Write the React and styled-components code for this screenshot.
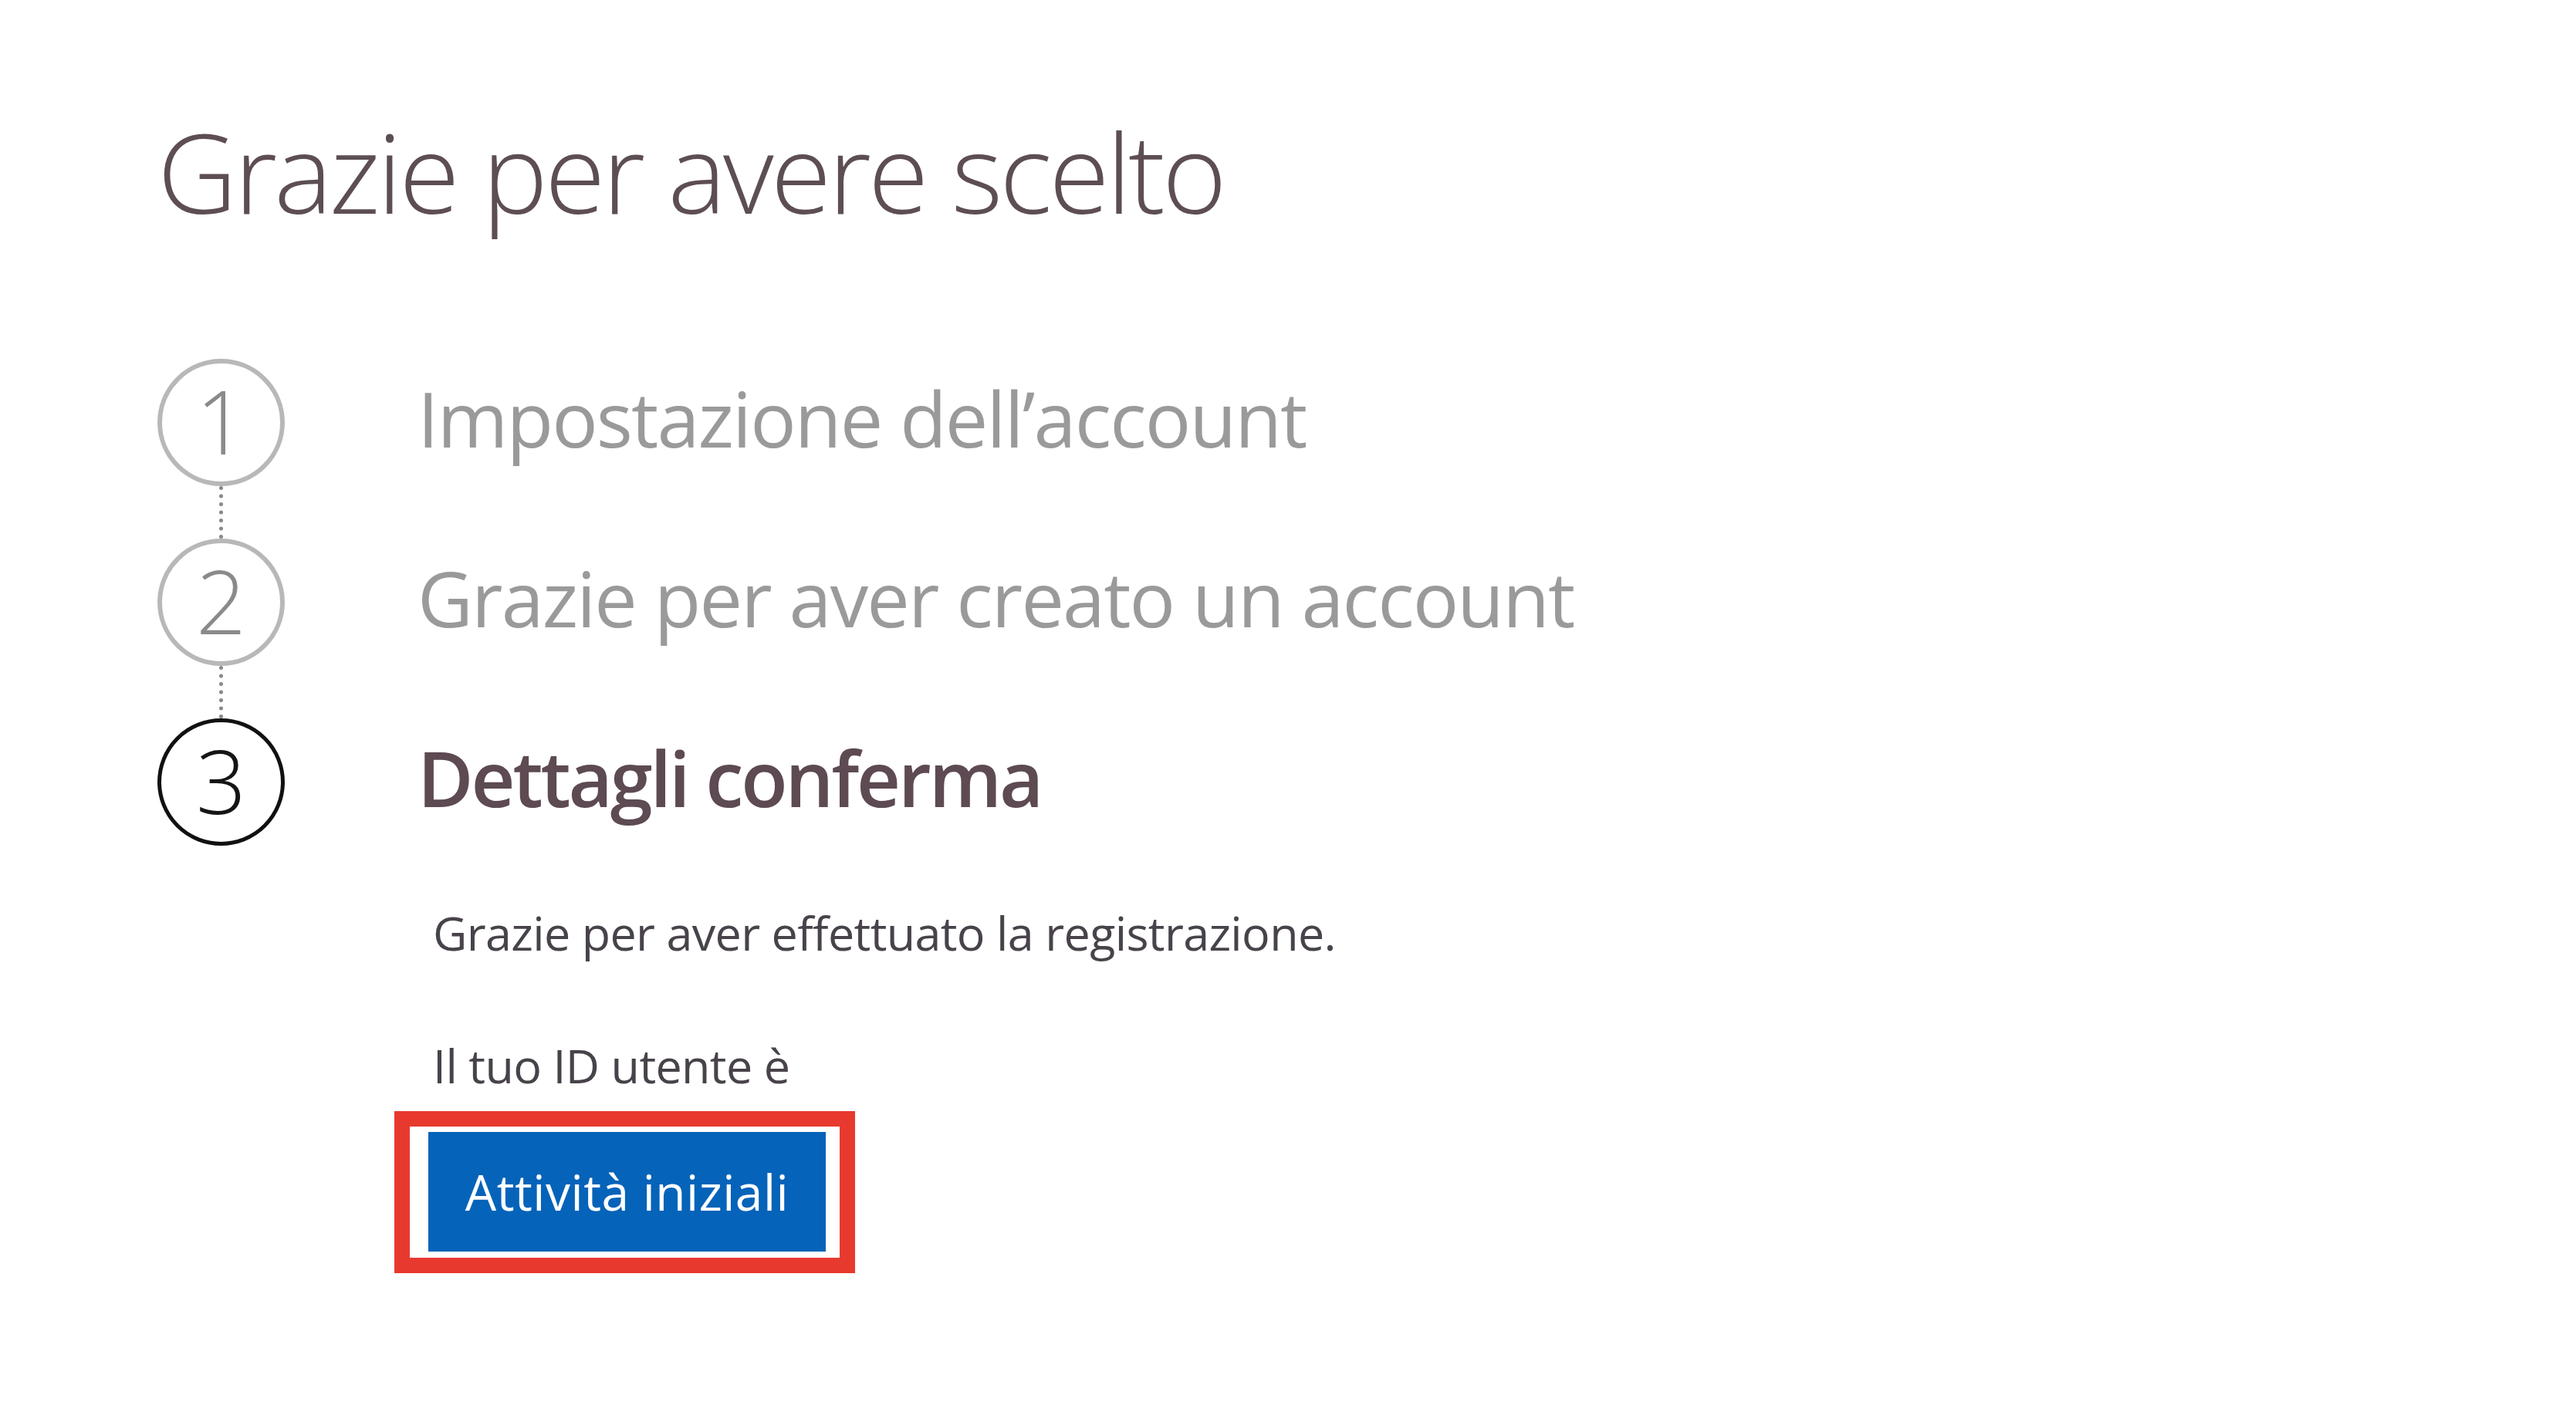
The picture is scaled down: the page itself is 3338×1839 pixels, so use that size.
import styled, { createGlobalStyle } from "styled-components";

const GlobalStyle = createGlobalStyle`
  html, body {
    margin: 0;
    padding: 0;
    background: #ffffff;
  }
  body {
    font-family: "Open Sans", "Noto Sans", "Liberation Sans", sans-serif;
  }
`;

const steps = [
  { id: 1, title: "Impostazione dell’account", done: true },
  { id: 2, title: "Grazie per aver creato un account", done: true },
  { id: 3, title: "Dettagli conferma", done: false },
];

const App = () => {
  return (
    <>
      <GlobalStyle />
      <Page>
        <Title>Grazie per avere scelto</Title>

        <Steps>
          {steps.map(({ id, title, done }, index) => (
            <Step key={id}>
              <Marker>
                <Circle done={done}>{id}</Circle>
                {index < steps.length - 1 && <Connector />}
              </Marker>
              <Label done={done}>{title}</Label>
            </Step>
          ))}
        </Steps>

        <Details>
          <Text>Grazie per aver effettuato la registrazione.</Text>
          <Text>Il tuo ID utente è</Text>
          <Highlight>
            <Button type="button">Attività iniziali</Button>
          </Highlight>
        </Details>
      </Page>
    </>
  );
};

export default App;

const Page = styled.div`
  min-height: 100vh;
  box-sizing: border-box;
  padding: 142px 0 0 204px;
  display: flex;
  flex-direction: column;
  align-items: flex-start;
`;

const Title = styled.h1`
  margin: 0;
  font-weight: 300;
  font-size: 143px;
  line-height: 160px;
  color: #5d4e54;
  letter-spacing: -4px;
`;

const Steps = styled.ol`
  list-style: none;
  margin: 0;
  padding: 0;
  margin-top: 163px;
  display: flex;
  flex-direction: column;
`;

const Step = styled.li`
  display: grid;
  grid-template-columns: 165px 1fr;
  column-gap: 172px;
  align-items: start;
`;

const Marker = styled.div`
  display: flex;
  flex-direction: column;
  align-items: center;
`;

const Circle = styled.div`
  box-sizing: border-box;
  width: 165px;
  height: 165px;
  border-radius: 50%;
  border: ${({ done }) => (done ? "6px solid #b8b8b8" : "5px solid #111111")};
  color: ${({ done }) => (done ? "#8a8a8a" : "#151515")};
  display: flex;
  align-items: center;
  justify-content: center;
  font-weight: 300;
  font-size: 114px;
  line-height: 1;
  padding-bottom: 6px;
`;

const Connector = styled.div`
  width: 0;
  height: 68px;
  border-left: 5px dotted #888888;
`;

const Label = styled.div`
  box-sizing: border-box;
  height: 165px;
  padding-bottom: 12px;
  display: flex;
  align-items: center;
  font-size: 99px;
  font-weight: ${({ done }) => (done ? 400 : 600)};
  color: ${({ done }) => (done ? "#9a9a9a" : "#5d4a52")};
  letter-spacing: ${({ done }) => (done ? "-1.9px" : "-3.1px")};
  white-space: nowrap;
`;

const Details = styled.div`
  margin-left: 357px;
  margin-top: 70px;
  display: flex;
  flex-direction: column;
  align-items: flex-start;
`;

const Text = styled.p`
  margin: 0 0 86px;
  font-size: 61px;
  line-height: 86px;
  color: #48434a;
  letter-spacing: -0.65px;
  &:last-of-type {
    margin-bottom: 16px;
  }
`;

const Highlight = styled.div`
  margin-left: -50px;
  border: 20px solid #e8392f;
  padding: 7px 18px 8px 24px;
  background: #ffffff;
`;

const Button = styled.button`
  display: flex;
  align-items: center;
  justify-content: center;
  width: 515px;
  height: 155px;
  border: none;
  background: #0563b9;
  color: #ffffff;
  font-family: "Open Sans", "Noto Sans", "Liberation Sans", sans-serif;
  font-size: 64px;
  font-weight: 500;
  letter-spacing: 0.5px;
  cursor: pointer;
`;
